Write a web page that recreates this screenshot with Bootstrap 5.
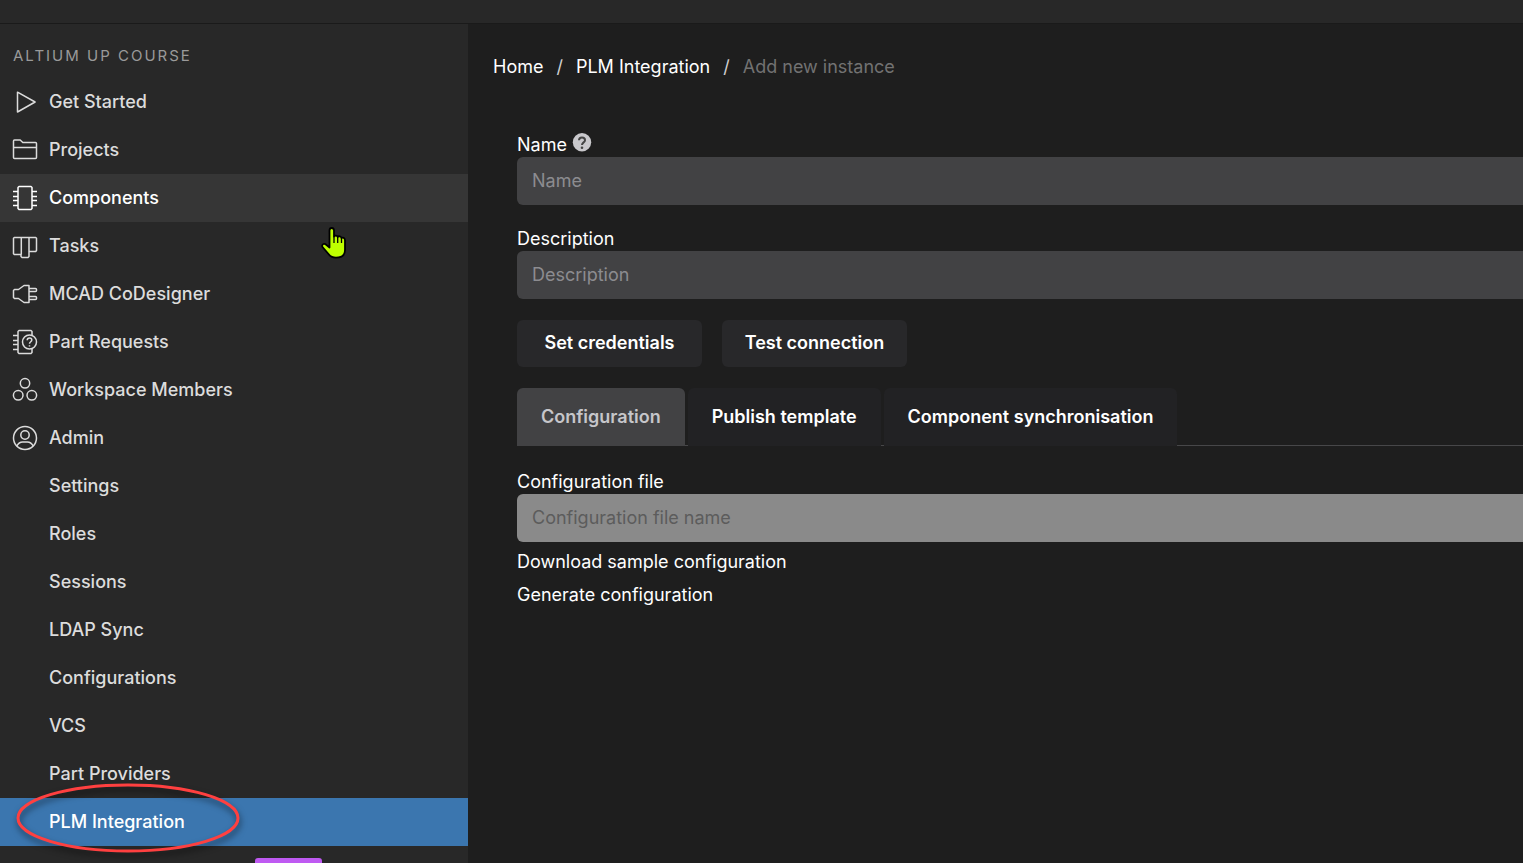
<!DOCTYPE html>
<html lang="en">
<head>
<meta charset="utf-8">
<meta name="viewport" content="width=device-width, initial-scale=1">
<title>PLM Integration</title>
<link rel="stylesheet" href="https://cdn.jsdelivr.net/npm/bootstrap@5.3.0/dist/css/bootstrap.min.css">
<style>
  body { font-family: Inter, "Liberation Sans", sans-serif; font-size: 18px; line-height: 24px; background: #1e1e1e; color: #fff; }
  .shell { height: 100vh; }
  .topbar { height: 24px; background: #282828; border-bottom: 1px solid #1a1a1a; }
  .sidebar { flex: 0 0 468px; background: #282828; }
  .side-title { font-size: 15px; font-weight: 400; line-height: 24px; letter-spacing: 2px; color: #9a9a9a; padding: 20px 13px 10px; }
  .side-link { height: 48px; padding: 0 12px; gap: 11px; color: #dcdcdc; font-weight: 500; border-radius: 0; }
  .side-link:hover, .side-link.hovered { background: #363636; color: #fff; }
  .side-link.current { background: #3b76af; color: #fff; }
  .side-link svg { width: 26px; height: 26px; fill: none; stroke: currentColor; stroke-width: 1.5; stroke-linejoin: round; flex: none; }
  .side-sub { padding-left: 49px; }
  .side-link .ring { position: absolute; left: 12px; top: -19px; width: 232px; height: 78px; stroke: #ff4040; stroke-width: 3; pointer-events: none; filter: drop-shadow(1px 4px 3px rgba(0,0,0,.55)); }
  .accent { width: 67px; height: 24px; background: #bf5af2; border-radius: 3px; margin: 12px 0 0 255px; }
  .pointer { position: absolute; left: 320px; top: 201px; pointer-events: none; }
  .content { padding: 31px 0 24px 25px; }
  .breadcrumb { --bs-breadcrumb-divider-color: #d0d0d0; --bs-breadcrumb-item-padding-x: 13px; --bs-breadcrumb-item-active-color: #727272; }
  .panel { padding: 54px 0 0 24px; }
  .panel a, .breadcrumb a { color: #fff; text-decoration: none; }
  .panel .form-label { display: block; margin: 0; }
  .panel .form-control { height: 48px; padding: 0 15px 2px; border: 0; border-radius: 6px 0 0 6px; background: #424244; color: #fff; font-size: 18px; }
  .panel .form-control::placeholder { color: #8c8c90; opacity: 1; }
  .panel .form-control:disabled { background: #8a8a8a; }
  .panel .form-control:disabled::placeholder { color: #5c5c5c; }
  .field { margin-bottom: 22px; }
  .actions { gap: 20px; margin-top: 21px; }
  .action { height: 47px; min-width: 185px; padding: 0 20px 2px; border: 0; border-radius: 6px; --bs-btn-bg: #28282a; --bs-btn-color: #fff; --bs-btn-hover-bg: #333335; --bs-btn-hover-color: #fff; --bs-btn-font-size: 18px; --bs-btn-font-weight: 600; }
  .panel .nav-tabs { --bs-nav-tabs-border-color: #474749; --bs-nav-tabs-border-width: 1px; gap: 3px; margin: 21px 0 24px; }
  .panel .nav-tabs .nav-link { height: 58px; padding: 0 24px; border: 0; border-radius: 6px 6px 0 0; background: #222224; color: #fff; font-weight: 600; }
  .panel .nav-tabs .nav-link.active { background: #424244; color: #c6c6ca; }
  .file-links { gap: 9px; padding-top: 8px; }
</style>
</head>
<body>
<div class="shell d-flex flex-column overflow-hidden">
  <header class="topbar flex-shrink-0"></header>
  <div class="d-flex flex-grow-1 position-relative overflow-hidden">
    <aside class="sidebar">
      <h2 class="side-title mb-0">ALTIUM UP COURSE</h2>
      <nav class="nav flex-column" aria-label="Workspace">
        <a href="#" class="nav-link side-link d-flex align-items-center">
          <svg viewBox="0 0 26 26"><path d="M5.500 3.200V23L23.100 13Z"/></svg>Get Started</a>
        <a href="#" class="nav-link side-link d-flex align-items-center">
          <svg viewBox="0 0 26 26"><path d="M1.500 20.500V4Q1.500 3 2.500 3H8.200L10.800 5.500H23.500Q24.500 5.500 24.500 6.500V20.500Q24.500 21.500 23.500 21.500H2.500Q1.500 21.500 1.500 20.500ZM1.500 10.500H24.500"/></svg>Projects</a>
        <a href="#" class="nav-link side-link hovered d-flex align-items-center">
          <svg viewBox="0 0 26 26"><path d="M7 1.500H19L20 2.500V23.500L19 24.500H7L6 23.500V2.500ZM1 6.500H6M1 11.500H6M1 15.500H6M1 20.500H6M20 6.500H25M20 11.500H25M20 15.500H25M20 20.500H25"/></svg>Components</a>
        <a href="#" class="nav-link side-link d-flex align-items-center">
          <svg viewBox="0 0 26 26"><path d="M2.300 4.500H23.700L24.500 5.300V17.500L23.700 18.500H17V23.500L16 24.500H10L9 23.500V21.500H2.300L1.500 20.700V5.300ZM9.300 4.500V21.500M17 4.500V18.500"/></svg>Tasks</a>
        <a href="#" class="nav-link side-link d-flex align-items-center">
          <svg viewBox="0 0 26 26"><path d="M1.500 9.500L2.500 8.500H6.500L12 4.500H17V21.500H12L6.500 17.500H2.500L1.500 16.500ZM17 7.500H23.500Q24.500 7.500 24.500 8.500V9.500Q24.500 10.500 23.500 10.500H17M17 15.500H23.500Q24.500 15.500 24.500 16.500V17.500Q24.500 18.500 23.500 18.500H17"/></svg>MCAD CoDesigner</a>
        <a href="#" class="nav-link side-link d-flex align-items-center">
          <svg viewBox="0 0 26 26"><path d="M20 6.300V2.500L19 1.500H7L6 2.500V23.500L7 24.500H19L20 23.500V19.700M1 6.500H6M1 11.500H6M1 15.500H6M1 20.500H6"/><circle cx="17.500" cy="13" r="7"/><path d="M15.200 11.300Q15.200 9 17.500 9T19.800 11.100C19.800 12.800 17.500 12.800 17.500 14.800M17.500 16.200V17.600"/></svg>Part Requests</a>
        <a href="#" class="nav-link side-link d-flex align-items-center">
          <svg viewBox="0 0 26 26"><circle cx="13" cy="6.300" r="4.700"/><circle cx="6.200" cy="18.300" r="4.800"/><circle cx="19.800" cy="18.300" r="4.800"/></svg>Workspace Members</a>
        <a href="#" class="nav-link side-link d-flex align-items-center">
          <svg viewBox="0 0 26 26"><circle cx="13" cy="13" r="11.500"/><circle cx="13" cy="10" r="4.200"/><path d="M4.800 21Q7 17 10.500 17H15.500Q19 17 21.200 21"/></svg>Admin</a>
        <a href="#" class="nav-link side-link side-sub d-flex align-items-center">Settings</a>
        <a href="#" class="nav-link side-link side-sub d-flex align-items-center">Roles</a>
        <a href="#" class="nav-link side-link side-sub d-flex align-items-center">Sessions</a>
        <a href="#" class="nav-link side-link side-sub d-flex align-items-center">LDAP Sync</a>
        <a href="#" class="nav-link side-link side-sub d-flex align-items-center">Configurations</a>
        <a href="#" class="nav-link side-link side-sub d-flex align-items-center">VCS</a>
        <a href="#" class="nav-link side-link side-sub d-flex align-items-center">Part Providers</a>
        <a href="#" class="nav-link side-link side-sub current d-flex align-items-center position-relative" aria-current="page">PLM Integration
          <svg class="ring" viewBox="0 0 232 78"><ellipse cx="116" cy="39" rx="110" ry="33"/></svg>
        </a>
      </nav>
      <div class="accent"></div>
    </aside>

    <main class="content flex-grow-1">
      <nav aria-label="breadcrumb">
        <ol class="breadcrumb mb-0">
          <li class="breadcrumb-item"><a href="#">Home</a></li>
          <li class="breadcrumb-item"><a href="#">PLM Integration</a></li>
          <li class="breadcrumb-item active" aria-current="page">Add new instance</li>
        </ol>
      </nav>
      <form class="panel">
        <div class="field">
          <div class="d-flex gap-1">
            <label class="form-label" for="name">Name</label>
            <svg width="22" height="20" viewBox="0 0 22 20" aria-hidden="true"><circle cx="11" cy="9.200" r="9.200" fill="#c9c8cc"/><path d="M8 7.300Q8 4.500 11 4.500T14 7.200C14 9.400 11 9.400 11 12" fill="none" stroke="#444" stroke-width="2"/><circle cx="11" cy="14.700" r="1.300" fill="#444"/></svg>
          </div>
          <input class="form-control" id="name" type="text" placeholder="Name">
        </div>
        <div>
          <label class="form-label" for="description">Description</label>
          <input class="form-control" id="description" type="text" placeholder="Description">
        </div>
        <div class="actions d-flex">
          <button type="button" class="btn action">Set credentials</button>
          <button type="button" class="btn action">Test connection</button>
        </div>
        <ul class="nav nav-tabs" role="tablist">
          <li class="nav-item" role="presentation"><button type="button" class="nav-link active" role="tab" aria-selected="true">Configuration</button></li>
          <li class="nav-item" role="presentation"><button type="button" class="nav-link" role="tab" aria-selected="false">Publish template</button></li>
          <li class="nav-item" role="presentation"><button type="button" class="nav-link" role="tab" aria-selected="false">Component synchronisation</button></li>
        </ul>
        <label class="form-label" for="config">Configuration file</label>
        <input class="form-control" id="config" type="text" placeholder="Configuration file name" disabled>
        <div class="file-links d-flex flex-column align-items-start">
          <a href="#">Download sample configuration</a>
          <a href="#">Generate configuration</a>
        </div>
      </form>
    </main>
    <svg class="pointer" width="28" height="36" viewBox="0 0 28 36" aria-hidden="true"><path d="M9.500 22.500V5.500Q9.500 3 11.700 3T14 5.500V11.500Q14.500 10.500 16 10.700T17.700 12Q18.500 11 19.800 11.300T21.500 13Q22.500 12.300 23.700 12.800T25 15.500V25Q25 32.700 16 32.700Q11 32.700 8.500 29L2.500 22Q1.500 20 3.500 19Q5 18.500 6.500 20Z" fill="#bfff00" stroke="#000" stroke-width="1.800" stroke-linejoin="round"/><path d="M14 11.500V18M17.700 12V18M21.500 13V18" stroke="#000" stroke-width="1.300"/></svg>
  </div>
</div>
<script src="https://cdn.jsdelivr.net/npm/bootstrap@5.3.0/dist/js/bootstrap.bundle.min.js"></script>
</body>
</html>
